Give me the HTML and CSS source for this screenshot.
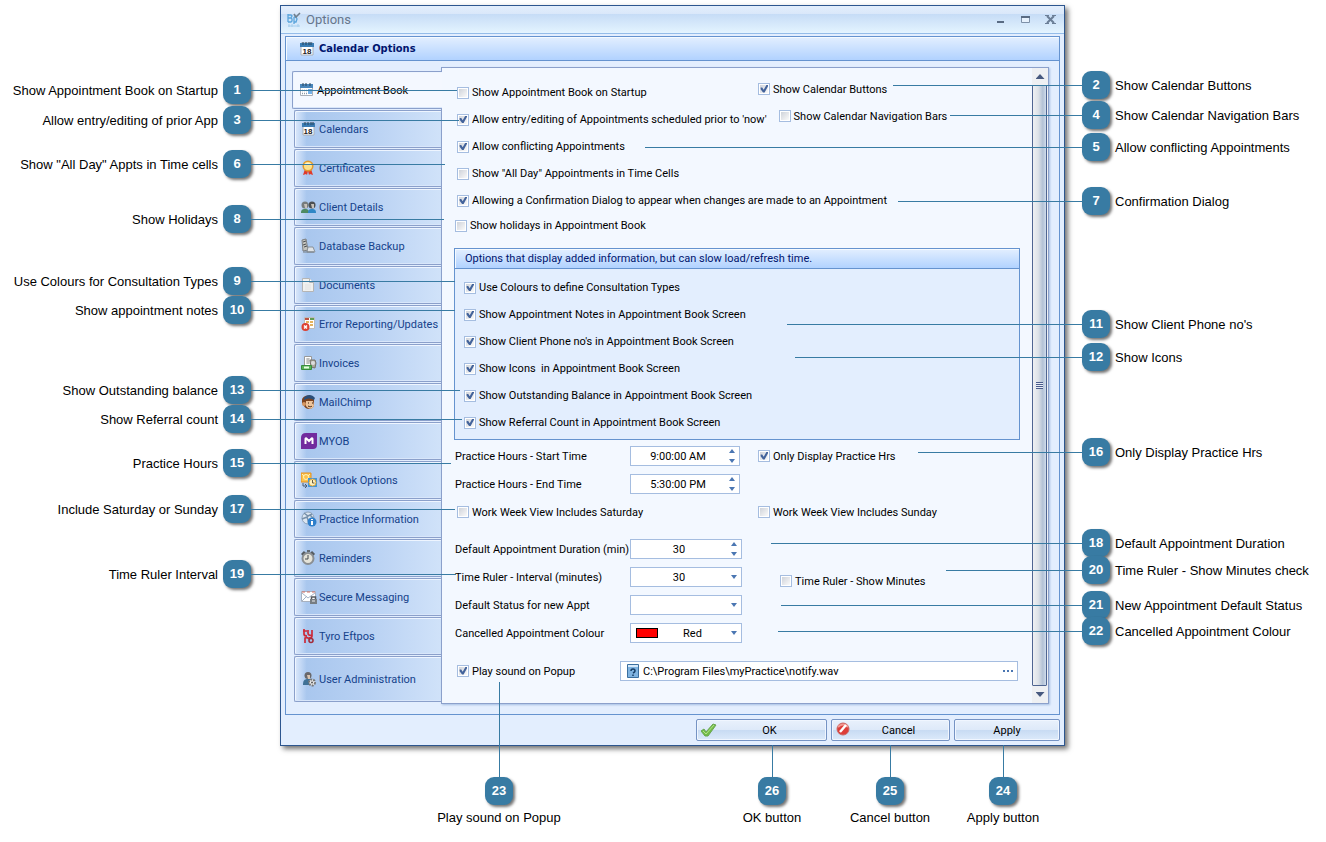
FILE: index.html
```
<!DOCTYPE html>
<html lang="en">
  <head>
    <meta charset="utf-8">
    <title>Options</title>
    <link rel="stylesheet" href="styles.css">
  </head>
  <body>
    <main class="figure">
      <section class="window" aria-label="Options">
        <header class="titlebar">
          <svg class="logo" viewBox="0 0 16 16"><path d="M2 2v8M2 3h3l1 1-1 2H2m3 0 1 1v2L5 10H2M8 5v7M8 5h2l1 2-1 3H8" fill="none" stroke="#5aa5dc" stroke-width="1.3"/><path d="m8 2 2 3 4-4" fill="none" stroke="#71808e" stroke-width="1.6"/><path d="M2 14h12M3 12v3M6 12v3M12 12v3" stroke="#a4cdec" stroke-width="1"/></svg>
          <h1>Options</h1>
          <div class="window-btns">
            <button aria-label="Minimise"><svg viewBox="0 0 12 12"><path d="M2 8h7" stroke="#596b83" stroke-width="2"/></svg></button>
            <button aria-label="Maximise"><svg viewBox="0 0 12 12"><path d="M1.500 2.500h8v6h-8z" fill="#e6f1fd" stroke="#7d90a8"/><path d="M1 3h9" stroke="#596b83" stroke-width="2"/></svg></button>
            <button aria-label="Close"><svg viewBox="0 0 12 12"><path d="m2 2 7 7m0-7-7 7" stroke="#6b7e97" stroke-width="2"/><path d="M0 1.500h4m3 0h4M0 9.500h4m3 0h4" stroke="#6b7e97"/></svg></button>
          </div>
        </header>

        <div class="group">
          <h2 class="group-title">
            <svg viewBox="0 0 16 16"><path d="M2 2h12v12H2z" fill="#fff" stroke="#a9afb8"/><path d="M1 2h14v4H1z" fill="#3a7cb4"/><path d="M4 1v3m3-3v3m3-3v3m2-3v3" stroke="#27445c"/><text x="8" y="13" class="day">18</text></svg>
            Calendar Options
          </h2>
          <div class="group-body">
            <nav class="tabs" role="tablist">
              <button role="tab" class="tab selected" aria-selected="true"><svg viewBox="0 0 16 16"><path d="M1.500 2.500h12v11h-12z" fill="#fff" stroke="#a9afb8"/><path d="M1 2h13v4H1z" fill="#4a86ba"/><path d="M4 1v3m3-3v3m4-3v3" stroke="#27445c"/><path d="M3 8.500h1m1 0h1m1 0h1m-5 3h1m1 0h1m1 0h1" stroke="#8b98a8" stroke-width="1.500"/><path d="M9 7h4v5H9z" fill="#74b1e8"/></svg>Appointment Book</button>
              <button role="tab" class="tab"><svg viewBox="0 0 16 16"><path d="M2 2h11v12H2z" fill="#fff" stroke="#a9afb8"/><path d="M1 2h13v4H1z" fill="#3a7cb4"/><path d="M4 1v3m3-3v3m3-3v3m2-3v3" stroke="#27445c"/><text x="7" y="13" class="day">18</text></svg>Calendars</button>
              <button role="tab" class="tab"><svg viewBox="0 0 16 16"><path d="m4 9-2 6 3-1 1 1 1-4 1 4 1-1 3 1-2-6z" fill="#e03a2a"/><circle cx="7" cy="6" r="4.800" fill="#fbe08b" stroke="#e29a2b" stroke-width="1.500"/><path d="M4 5c1-2 4-2 6 0" stroke="#fff6cf" stroke-width="1.500" fill="none"/></svg>Certificates</button>
              <button role="tab" class="tab"><svg viewBox="0 0 16 16"><path d="M0 14c0-3 1-4 4-4s4 1 4 4z" fill="#4d8a62"/><path d="M7 14c0-3 1-4 4-4s4 1 4 4z" fill="#2f87c6"/><circle cx="4" cy="6" r="3.500" fill="#777c7d"/><circle cx="11" cy="6" r="3.500" fill="#4d5052"/><path d="M3 5h3v4H4zm7 0h3v4h-2z" fill="#c8c2ba"/></svg>Client Details</button>
              <button role="tab" class="tab"><svg viewBox="0 0 16 16"><path d="M1 2 5 1l2 11-5 1z" fill="#c4c4bf" stroke="#7d8082"/><path d="m2 4 3-1m-3 4 3-1M3 9l3-1" stroke="#4c5053"/><path d="M7 9h5l2 5H6z" fill="#dfe3e7" stroke="#8b9299"/><path d="M2 14h11" stroke="#737a80"/></svg>Database Backup</button>
              <button role="tab" class="tab"><svg viewBox="0 0 16 16"><path d="M1.500 1.500h7l4 4v9h-11z" fill="#f1f1ef" stroke="#b5b5b5"/><path d="M8.500 1.500v4h4" fill="#fff" stroke="#b5b5b5"/><path d="M4 8h6m-6 2h6m-6 2h6" stroke="#e2e2e2"/></svg>Documents</button>
              <button role="tab" class="tab"><svg viewBox="0 0 16 16"><path d="M3.500 1.500h10v11h-10z" fill="#fff" stroke="#bbb"/><path d="M4 2h4v2H4z" fill="#bc5344"/><path d="M9 2h4v2H9z" fill="#5f9d52"/><path d="M5 6h3m1 0h3m-3 3h3" stroke="#e4b35d" stroke-width="2"/><circle cx="4.500" cy="11" r="4" fill="#dd4031"/><path d="m3 9.500 3 3m0-3-3 3" stroke="#fff" stroke-width="1.500"/></svg>Error Reporting/Updates</button>
              <button role="tab" class="tab"><svg viewBox="0 0 16 16"><path d="M3.500 1.500h7v9h-7z" fill="#fff" stroke="#999"/><path d="M5 4h4M5 6h4M5 8h4M7 3v6" stroke="#aaa"/><path d="M9 5h5l1 3-1 5-4-1z" fill="#aaa69b" stroke="#77736b"/><circle cx="12" cy="8" r="2" fill="#ddd"/><path d="M.500 10.500h10v4H.5z" fill="#59b15a" stroke="#378b3d"/><path d="M3 12.500h5" stroke="#e7ffe2" stroke-width="2"/></svg>Invoices</button>
              <button role="tab" class="tab"><svg viewBox="0 0 16 16"><path d="M1 6c0-4 8-7 12-2v8c-2 4-8 4-10 0L1 9z" fill="#7b431f"/><path d="M5 7h7l1 5c-2 4-6 3-8 0z" fill="#edc399"/><path d="M3 4c3-4 8-4 11 0l-1 2C10 4 7 4 3 6z" fill="#294e78"/><path d="M7 9h1m3 0h1m-5 3c2 1 3 1 4 0" fill="none" stroke="#3b2213"/><circle cx="3" cy="10" r="2" fill="#d59762"/></svg>MailChimp</button>
              <button role="tab" class="tab"><svg viewBox="0 0 16 16"><path d="M5 0h11v12q0 4-4 4H0V5q0-5 5-5z" fill="#722b9e"/><path d="M4.500 11V6q0-1 1-.5L8 8l2.500-2.500q1-.5 1 .5v5" fill="none" stroke="#fff" stroke-width="2"/></svg>MYOB</button>
              <button role="tab" class="tab"><svg viewBox="0 0 16 16"><path d="M0 1h10v9H0z" fill="#fbc34d" stroke="#e5901e"/><circle cx="5" cy="5" r="2.500" fill="none" stroke="#fff1bc"/><path d="m1 2 2 2m6-2L7 4" stroke="#fff1bc"/><path d="M2 11v3h3m-1-2 2 2-2 2" fill="none" stroke="#475d76"/><path d="M7 6h9v9H7z" fill="#4295d8"/><circle cx="11.500" cy="10.500" r="3.500" fill="#fff0bd" stroke="#dda637"/><path d="M11.500 8v3h2" fill="none" stroke="#665c42"/></svg>Outlook Options</button>
              <button role="tab" class="tab"><svg viewBox="0 0 16 16"><circle cx="7" cy="7" r="6" fill="#dce6f1" stroke="#8fa2b8"/><path d="m3 2 4 3 4-2M1 8l5-2 2 6m1-8 4 4" fill="none" stroke="#7790aa" stroke-width="1.500"/><circle cx="11" cy="11" r="4.500" fill="#2d7fcc"/><path d="M11 10v4m0-6v1" stroke="#fff" stroke-width="2"/></svg>Practice Information</button>
              <button role="tab" class="tab"><svg viewBox="0 0 16 16"><path d="m1 5 3-3m6 0 3 3" stroke="#555b60" stroke-width="3"/><circle cx="7" cy="8.500" r="5.500" fill="#e5e3d8" stroke="#8b8f92" stroke-width="2"/><path d="M7 5v4H4" fill="none" stroke="#454a4e"/><path d="M6 1h3" stroke="#616971" stroke-width="2"/></svg>Reminders</button>
              <button role="tab" class="tab"><svg viewBox="0 0 16 16"><path d="M.500 2.500h14v10H.5z" fill="#fff" stroke="#a8b1bf"/><path d="M1 3h3m2 0h3m2 0h3" stroke="#d66f65"/><path d="m1 4 6 5 7-5M1 12l5-5" fill="none" stroke="#a4b2c6"/><path d="M10.500 10V8h4v2" fill="none" stroke="#54585d" stroke-width="1.500"/><path d="M9 10h7v5H9z" fill="#777d82"/><path d="M11 12h3" stroke="#eee"/></svg>Secure Messaging</button>
              <button role="tab" class="tab"><svg viewBox="0 0 16 16"><path d="M3 1v5q0 2 3 2M2 3h4m1-1v3q0 3 4 2m0-5v6q0 2-3 2M4 15v-5q3-1 4 1" fill="none" stroke="#cc2a39" stroke-width="1.700"/><circle cx="10" cy="12.500" r="2" fill="none" stroke="#a32c3a" stroke-width="1.600"/></svg>Tyro Eftpos</button>
              <button role="tab" class="tab last"><svg viewBox="0 0 16 16"><path d="M2 14c0-4 1-6 5-6s5 2 5 6z" fill="#3f7196"/><circle cx="7" cy="4.500" r="3.500" fill="#69676a"/><path d="M6 4h3v4H7z" fill="#dbc4b0"/><circle cx="11" cy="11.500" r="3" fill="#eee" stroke="#777" stroke-width="2" stroke-dasharray="2 1"/><circle cx="11" cy="11.500" r="1" fill="#555"/></svg>User Administration</button>
            </nav>

            <div class="page">
              <form class="fields">
                <div class="row">
                  <label class="check first"><input type="checkbox">Show Appointment Book on Startup</label>
                  <label class="check raised"><input type="checkbox" checked>Show Calendar Buttons</label>
                </div>
                <div class="row">
                  <label class="check"><input type="checkbox" checked>Allow entry/editing of Appointments scheduled prior to 'now'</label>
                  <label class="check raised nav-bars"><input type="checkbox">Show Calendar Navigation Bars</label>
                </div>
                <div class="row"><label class="check"><input type="checkbox" checked>Allow conflicting Appointments</label></div>
                <div class="row"><label class="check"><input type="checkbox">Show "All Day" Appointments in Time Cells</label></div>
                <div class="row"><label class="check"><input type="checkbox" checked>Allowing a Confirmation Dialog to appear when changes are made to an Appointment</label></div>
                <div class="row holidays"><label class="check"><input type="checkbox">Show holidays in Appointment Book</label></div>

                <fieldset class="extra">
                  <div class="extra-title">Options that display added information, but can slow load/refresh time.</div>
                  <label class="check"><input type="checkbox" checked>Use Colours to define Consultation Types</label>
                  <label class="check"><input type="checkbox" checked>Show Appointment Notes in Appointment Book Screen</label>
                  <label class="check"><input type="checkbox" checked>Show Client Phone no's in Appointment Book Screen</label>
                  <label class="check"><input type="checkbox" checked>Show Icons&nbsp; in Appointment Book Screen</label>
                  <label class="check"><input type="checkbox" checked>Show Outstanding Balance in Appointment Book Screen</label>
                  <label class="check"><input type="checkbox" checked>Show Referral Count in Appointment Book Screen</label>
                </fieldset>

                <div class="row setting">
                  <label class="name" for="start">Practice Hours - Start Time</label>
                  <div class="box time"><input type="text" id="start" value="9:00:00 AM"><span class="spin"><i class="up"></i><i class="down"></i></span></div>
                  <label class="check"><input type="checkbox" checked>Only Display Practice Hrs</label>
                </div>
                <div class="row setting">
                  <label class="name" for="end">Practice Hours - End Time</label>
                  <div class="box time"><input type="text" id="end" value="5:30:00 PM"><span class="spin"><i class="up"></i><i class="down"></i></span></div>
                </div>
                <div class="row weekend">
                  <label class="check first"><input type="checkbox">Work Week View Includes Saturday</label>
                  <label class="check"><input type="checkbox">Work Week View Includes Sunday</label>
                </div>

                <div class="row setting spaced">
                  <label class="name" for="duration">Default Appointment Duration (min)</label>
                  <div class="box"><input type="text" id="duration" value="30"><span class="spin"><i class="up"></i><i class="down"></i></span></div>
                </div>
                <div class="row setting">
                  <label class="name" for="interval">Time Ruler - Interval (minutes)</label>
                  <div class="box"><select id="interval"><option>30</option></select><span class="spin"><i class="down"></i></span></div>
                  <label class="check lowered"><input type="checkbox">Time Ruler - Show Minutes</label>
                </div>
                <div class="row setting">
                  <label class="name" for="status">Default Status for new Appt</label>
                  <div class="box"><select id="status"><option></option></select><span class="spin"><i class="down"></i></span></div>
                </div>
                <div class="row setting">
                  <label class="name" for="colour">Cancelled Appointment Colour</label>
                  <div class="box"><span class="swatch"></span><select id="colour"><option>Red</option></select><span class="spin"><i class="down"></i></span></div>
                </div>

                <div class="row sound">
                  <label class="check"><input type="checkbox" checked>Play sound on Popup</label>
                  <div class="box file">
                    <svg viewBox="0 0 12 14"><path d="M.500.500h11v13H.5z" fill="#7fb3e0" stroke="#3b6f9f"/><path d="M1 2h10" stroke="#d5e9fa" stroke-width="2"/><path d="M4 7q0-2 2-2t2 2q0 1-2 2m0 1.500V12" fill="none" stroke="#173e66" stroke-width="1.500"/></svg>
                    <input type="text" value="C:\Program Files\myPractice\notify.wav" aria-label="Sound file">
                    <button type="button" class="browse" aria-label="Browse"><i></i><i></i><i></i></button>
                  </div>
                </div>
              </form>

              <div class="scroll">
                <button aria-label="Scroll up"><i class="up"></i></button>
                <div class="thumb"><span class="grip"></span></div>
                <button aria-label="Scroll down"><i class="down"></i></button>
              </div>
            </div>
          </div>
        </div>

        <footer class="buttons">
          <button class="btn ok"><svg viewBox="0 0 16 16"><path d="m0 9 3-2 2 3 7-8 3 1-8 11H4z" fill="#72bd46" stroke="#6aa653"/><path d="m2 9 3 3 8-9" fill="none" stroke="#b4e18b"/></svg><span>OK</span></button>
          <button class="btn cancel"><svg viewBox="0 0 16 16"><circle cx="7" cy="7" r="6" fill="#dd3d38" stroke="#c96a68"/><path d="M2 5q5-5 10 0" stroke="#f29a93" stroke-width="2" fill="none"/><path d="m4 10 6-7" stroke="#fff" stroke-width="2.500"/></svg><span>Cancel</span></button>
          <button class="btn apply"><span>Apply</span></button>
        </footer>
      </section>

      <!-- numbered callouts with leader lines -->
      <div class="pin left pin-1"><span>Show Appointment Book on Startup</span><b>1</b></div>
      <div class="pin left pin-3"><span>Allow entry/editing of prior App</span><b>3</b></div>
      <div class="pin left pin-6"><span>Show "All Day" Appts in Time cells</span><b>6</b></div>
      <div class="pin left pin-8"><span>Show Holidays</span><b>8</b></div>
      <div class="pin left pin-9"><span>Use Colours for Consultation Types</span><b>9</b></div>
      <div class="pin left pin-10"><span>Show appointment notes</span><b>10</b></div>
      <div class="pin left pin-13"><span>Show Outstanding balance</span><b>13</b></div>
      <div class="pin left pin-14"><span>Show Referral count</span><b>14</b></div>
      <div class="pin left pin-15"><span>Practice Hours</span><b>15</b></div>
      <div class="pin left pin-17"><span>Include Saturday or Sunday</span><b>17</b></div>
      <div class="pin left pin-19"><span>Time Ruler Interval</span><b>19</b></div>

      <div class="pin right pin-2"><b>2</b><span>Show Calendar Buttons</span></div>
      <div class="pin right pin-4"><b>4</b><span>Show Calendar Navigation Bars</span></div>
      <div class="pin right pin-5"><b>5</b><span>Allow conflicting Appointments</span></div>
      <div class="pin right pin-7"><b>7</b><span>Confirmation Dialog</span></div>
      <div class="pin right pin-11"><b>11</b><span>Show Client Phone no's</span></div>
      <div class="pin right pin-12"><b>12</b><span>Show Icons</span></div>
      <div class="pin right pin-16"><b>16</b><span>Only Display Practice Hrs</span></div>
      <div class="pin right pin-18"><b>18</b><span>Default Appointment Duration</span></div>
      <div class="pin right pin-20"><b>20</b><span>Time Ruler - Show Minutes check</span></div>
      <div class="pin right pin-21"><b>21</b><span>New Appointment Default Status</span></div>
      <div class="pin right pin-22"><b>22</b><span>Cancelled Appointment Colour</span></div>

      <div class="pin below pin-23"><b>23</b><span>Play sound on Popup</span></div>
      <div class="pin below pin-26"><b>26</b><span>OK button</span></div>
      <div class="pin below pin-25"><b>25</b><span>Cancel button</span></div>
      <div class="pin below pin-24"><b>24</b><span>Apply button</span></div>
    </main>
  </body>
</html>
```
FILE: styles.css
```
* {
  box-sizing: border-box;
}
body {
  margin: 0;
  background: #fff;
  font-family: Roboto, "Liberation Sans", sans-serif;
  font-size: 11px;
  color: #000;
}
button, input, select {
  font: inherit;
  color: inherit;
  margin: 0;
  padding: 0;
  border: 0;
  background: none;
}
svg {
  width: 16px;
  height: 16px;
  flex: none;
}
.day {
  font: bold 8px "Liberation Sans", sans-serif;
  text-anchor: middle;
  fill: #222;
}
.figure {
  position: relative;
  padding: 5px 261px 96px 280px;
  min-width: 1326px;
}

/* window frame */
.window {
  border: 1px solid #2d568f;
  background: #e3eefe;
  box-shadow: 3px 3px 5px rgba(0, 0, 0, .55);
  padding: 0 4px 4px;
}
.titlebar {
  display: flex;
  align-items: center;
  height: 28px;
  margin: 0 -4px 2px;
  padding: 0 7px 0 5px;
  background: linear-gradient(#e3eefc 0, #dae8fa 28%, #c6dcf6 30%, #e4f4ff 100%);
  border-bottom: 1px solid #94bce9;
}
.titlebar h1 {
  flex: 1;
  margin: 0 0 0 4px;
  font-size: 13px;
  font-weight: normal;
  color: #66768c;
}
.window-btns {
  display: flex;
  gap: 13px;
}
.window-btns svg {
  display: block;
  width: 12px;
  height: 12px;
}
.group {
  border: 1px solid #6593cf;
}
.group-title {
  display: flex;
  align-items: center;
  gap: 4px;
  height: 24px;
  margin: 0;
  padding-left: 13px;
  font-family: "DejaVu Sans Condensed", "DejaVu Sans", sans-serif;
  font-size: 11px;
  color: #00156e;
  background: linear-gradient(#e3efff, #b1d2ff);
  border-bottom: 1px solid #6593cf;
  box-shadow: inset 1px 1px #f5faff;
}
.group-body {
  display: flex;
  padding: 6px 10px 10px 6px;
}

/* side tabs */
.tabs {
  display: flex;
  flex-direction: column;
  gap: 1px;
  width: 149px;
  flex: none;
  padding-top: 4px;
}
.tab {
  display: flex;
  align-items: center;
  gap: 2px;
  height: 38px;
  margin-left: 2px;
  padding-left: 6px;
  border: 1px solid #8ba0cb;
  border-right: 0;
  border-radius: 2px 0 0 2px;
  background: linear-gradient(90deg, #dbe8fb 0, #c3d8f5 4%, #a9c7ee 8%, #b8d1f3 50%, #d0e2f9 100%);
  box-shadow: inset 1px 1px #eef5ff, inset 0 -1px #d8e6fa;
  color: #15428b;
  text-align: left;
  white-space: nowrap;
}
.tab.selected {
  position: relative;
  margin-left: 0;
  margin-right: -1px;
  background: #f4f8ff;
  color: #000;
}
.tab.last {
  height: 46px;
}

.page {
  display: flex;
  flex: 1;
  border: 1px solid #8ba0cb;
  background: #f3f8ff;
  box-shadow: 1px 1px 2px #a5bfe3;
}
.fields {
  flex: 1;
  padding: 11px 12px 18px;
}
.row {
  display: flex;
  align-items: center;
  height: 27px;
  padding-left: 3px;
}
.check {
  display: flex;
  align-items: center;
  gap: 3px;
  height: 20px;
  white-space: nowrap;
}
.check input {
  appearance: none;
  flex: none;
  width: 12px;
  height: 12px;
  padding: 1px;
  border: 1px solid #a5bde0;
  background: linear-gradient(135deg, #cfd3da, #fafafa) content-box, #fff;
}
.check input:checked::before {
  content: "";
  display: block;
  width: 8px;
  height: 8px;
  background: #43639b;
  clip-path: polygon(8% 30%, 28% 30%, 46% 58%, 80% 0, 100% 0, 100% 16%, 58% 94%, 38% 94%, 8% 52%);
}
.first {
  width: 301px;
}
.raised {
  align-self: flex-start;
}
.nav-bars {
  margin-left: 12px;
}
.holidays {
  height: 23px;
  padding-left: 1px;
}

/* options that slow the refresh */
.extra {
  margin: 11px 0 2px;
  padding: 0 0 3px;
  border: 1px solid #6593cf;
  background: #e3eefe;
}
.extra-title {
  height: 20px;
  margin-bottom: 5px;
  padding-left: 10px;
  line-height: 19px;
  color: #00156e;
  background: linear-gradient(#e3efff, #b1d2ff);
  border-bottom: 1px solid #6593cf;
  box-shadow: inset 1px 1px #f5faff;
}
.extra .check {
  height: 27px;
  padding-left: 9px;
}

.setting {
  height: 28px;
  padding-left: 1px;
}
.weekend {
  height: 28px;
}
.spaced {
  margin-top: 9px;
}
.name {
  width: 175px;
  white-space: nowrap;
}
.box {
  display: flex;
  align-items: center;
  width: 112px;
  height: 20px;
  border: 1px solid #a5bde0;
  background: #fff;
}
.box.time {
  width: 110px;
}
.box input, .box select {
  appearance: none;
  flex: 1;
  min-width: 0;
  outline: 0;
  text-align: center;
  text-align-last: center;
}
.time + .check {
  margin-left: 18px;
}
.lowered {
  align-self: flex-end;
  margin-left: 38px;
}
.spin {
  display: flex;
  flex-direction: column;
  align-items: center;
  gap: 6px;
  width: 14px;
}
.up, .down {
  width: 6px;
  height: 4px;
  background: #4a76b2;
  clip-path: polygon(50% 0, 100% 100%, 0 100%);
}
.down {
  clip-path: polygon(0 0, 100% 0, 50% 100%);
}
.swatch {
  width: 22px;
  height: 10px;
  margin-left: 5px;
  border: 1px solid #000;
  background: #f00;
}
.sound {
  justify-content: space-between;
  height: 28px;
  margin-top: 10px;
}
.box.file {
  width: 398px;
  margin-right: 2px;
  padding: 0 4px 0 6px;
  gap: 4px;
}
.file svg {
  width: 12px;
  height: 14px;
}
.file input {
  text-align: left;
  text-align-last: left;
}
.browse {
  display: flex;
  gap: 2px;
}
.browse i {
  width: 2px;
  height: 2px;
  background: #4a76b2;
}

/* scroll bar */
.scroll {
  display: flex;
  flex-direction: column;
  width: 16px;
  background: #eef0f3;
}
.scroll button {
  display: flex;
  align-items: center;
  justify-content: center;
  height: 17px;
}
.scroll .up, .scroll .down {
  width: 9px;
  height: 5px;
  background: #47597f;
}
.thumb {
  display: flex;
  align-items: center;
  justify-content: center;
  flex: 1;
  width: 15px;
  border: 1px solid #4f6591;
  border-radius: 1px;
  background: linear-gradient(90deg, #eef0f3, #dde2e8 40%, #b3c2d6 75%, #cfdcec);
}
.grip {
  width: 7px;
  height: 7px;
  background: repeating-linear-gradient(#4a5c8c 0 1px, #e8edf5 1px 2px);
}

.buttons {
  display: flex;
  justify-content: flex-end;
  gap: 4px;
  padding-top: 4px;
}
.btn {
  display: flex;
  align-items: center;
  height: 22px;
  padding: 0 4px;
  border: 1px solid #7593c4;
  border-radius: 2px;
  background: linear-gradient(#e9f1fc 0, #dde9f9 50%, #c8dbf3 52%, #dceafa 100%);
  box-shadow: inset 0 0 0 1px #f0f6ff;
}
.btn span {
  flex: 1;
}
.ok {
  width: 131px;
}
.cancel {
  width: 119px;
}
.apply {
  width: 106px;
}

/* callouts */
.pin {
  position: absolute;
  display: flex;
  align-items: center;
  font-family: "Liberation Sans", Arial, sans-serif;
  font-size: 13px;
  white-space: nowrap;
  pointer-events: none;
}
.pin b {
  flex: none;
  width: 28px;
  height: 28px;
  line-height: 28px;
  border-radius: 9px;
  background: #387ba3;
  box-shadow: 2px 2px 3px rgba(0, 0, 0, .55);
  color: #fff;
  text-align: center;
}
.left, .right {
  gap: 5px;
  height: 28px;
}
.left {
  left: 0;
}
.left span {
  width: 218px;
  text-align: right;
}
.right {
  right: 0;
}
.right span {
  width: 211px;
}
.left::after, .right::before {
  content: "";
  flex: 1;
  height: 1px;
  background: #387ba3;
}
.left::after {
  margin-left: -5px;
}
.right::before {
  margin-right: -5px;
}
.below {
  bottom: 15px;
  flex-direction: column;
  width: 140px;
}
.below::before {
  content: "";
  width: 1px;
  height: 32px;
  background: #387ba3;
}
.below span {
  margin-top: 4px;
  line-height: 18px;
}
.pin-1 { top: 76px; width: 457px; }
.pin-3 { top: 106px; width: 459px; }
.pin-6 { top: 150px; width: 445px; }
.pin-8 { top: 205px; width: 444px; }
.pin-9 { top: 267px; width: 455px; }
.pin-10 { top: 296px; width: 455px; }
.pin-13 { top: 376px; width: 460px; }
.pin-14 { top: 405px; width: 462px; }
.pin-15 { top: 449px; width: 451px; }
.pin-17 { top: 495px; width: 455px; }
.pin-19 { top: 560px; width: 456px; }
.pin-2 { top: 71px; left: 893px; }
.pin-4 { top: 101px; left: 950px; }
.pin-5 { top: 133px; left: 645px; }
.pin-7 { top: 187px; left: 898px; }
.pin-11 { top: 310px; left: 787px; }
.pin-12 { top: 343px; left: 795px; }
.pin-16 { top: 438px; left: 918px; }
.pin-18 { top: 529px; left: 771px; }
.pin-20 { top: 556px; left: 946px; }
.pin-21 { top: 591px; left: 781px; }
.pin-22 { top: 617px; left: 778px; }
.pin-23 { left: 429px; }
.pin-26 { right: 484px; }
.pin-25 { right: 366px; }
.pin-24 { right: 253px; }
.pin-23::before { height: 95px; }
```
